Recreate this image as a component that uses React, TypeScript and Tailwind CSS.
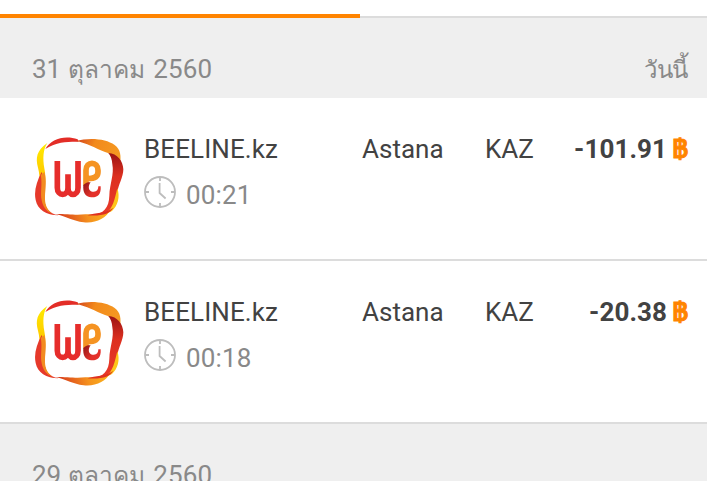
type Call = {
   operator: string
   city: string
   country: string
   duration: string
   amount: string
}

const calls: Call[] = [
   { operator: 'BEELINE.kz', city: 'Astana', country: 'KAZ', duration: '00:21', amount: '-101.91' },
   { operator: 'BEELINE.kz', city: 'Astana', country: 'KAZ', duration: '00:18', amount: '-20.38' },
]

const Logo = () => {
   return (
      <svg className="h-[92px] w-[92px] flex-shrink-0" viewBox="42 27 276 276" fill="none">
         <defs>
            <linearGradient id="left" x1="60" y1="70" x2="60" y2="260" gradientUnits="userSpaceOnUse">
               <stop offset="0" stopColor="#ffe600" />
               <stop offset="0.5" stopColor="#fdc400" />
               <stop offset="1" stopColor="#f0801c" />
            </linearGradient>
            <linearGradient id="top" x1="180" y1="45" x2="300" y2="90" gradientUnits="userSpaceOnUse">
               <stop offset="0" stopColor="#d9501c" />
               <stop offset="0.35" stopColor="#f28a1c" />
               <stop offset="1" stopColor="#f59a22" />
            </linearGradient>
            <linearGradient id="right" x1="285" y1="85" x2="290" y2="260" gradientUnits="userSpaceOnUse">
               <stop offset="0" stopColor="#9c1414" />
               <stop offset="0.4" stopColor="#dd3020" />
               <stop offset="1" stopColor="#e8392a" />
            </linearGradient>
            <linearGradient id="bottom" x1="120" y1="270" x2="290" y2="220" gradientUnits="userSpaceOnUse">
               <stop offset="0" stopColor="#d9401c" />
               <stop offset="0.45" stopColor="#f5921e" />
               <stop offset="1" stopColor="#fdc51a" />
            </linearGradient>
            <linearGradient id="tail" x1="190" y1="172" x2="222" y2="200" gradientUnits="userSpaceOnUse">
               <stop offset="0" stopColor="#8f1616" />
               <stop offset="1" stopColor="#e4312a" />
            </linearGradient>
         </defs>
         <path d="M82 54C50 76 46 98 54 128C62 158 59 196 62 222C65 246 77 263 102 270C80 258 73 242 73 215C73 188 80 162 73 130C68 100 69 74 82 54Z" fill="url(#left)" />
         <path d="M65 140C50 170 41 197 47 225C53 254 78 270 116 271C86 264 75 250 72 218C70 190 72 166 65 140Z" fill="#e6392a" />
         <path d="M62 150C68 177 60 202 65 226C69 246 78 259 96 266C80 252 74 238 75 214C76 190 81 168 73 141Z" fill="#f28b20" />
         <path d="M76 72C92 41 136 29 173 43L176 50C142 50 112 49 76 72Z" fill="#e32d27" />
         <path d="M166 48C210 37 258 41 284 60C302 73 304 93 300 118C294 99 280 89 255 81C225 70 201 53 166 48Z" fill="url(#top)" />
         <path d="M265 84C292 86 309 107 310 133C310 158 294 180 292 204C290 235 288 253 257 267C244 271 230 271 215 271C251 266 267 248 268 212C269 177 283 148 277 118C276 102 272 92 265 84Z" fill="url(#right)" />
         <path d="M292 190C301 216 293 243 276 258L256 268C279 251 284 222 292 190Z" fill="#fdc51a" />
         <path d="M106 267C145 267 166 271 196 268C225 267 250 270 272 253C258 282 225 296 191 292C158 288 142 275 106 267Z" fill="url(#bottom)" />
         <path d="M202 271C227 262 256 266 280 248C269 266 248 274 202 271Z" fill="#df3020" />
         <path d="M112 108V188C112 215 144 215 144 188V148M144 188C144 215 174 215 174 188V108" stroke="#e62d2b" strokeWidth="17" />
         <path d="M198 182V136C198 108 234 108 234 136V141C234 158 218 161 203 161" stroke="#f59322" strokeWidth="17" />
         <path d="M190 180C198 171 209 171 212 172C204 182 204 198 217 200C229 202 235 196 235 184H242C244 211 231 218 214 217C196 216 188 202 190 180Z" fill="url(#tail)" />
      </svg>
   )
}

const Clock = () => {
   return (
      <svg className="h-8 w-8" viewBox="0 0 32 32" fill="none" stroke="#bdbdbd" strokeWidth="1.8">
         <circle cx="16" cy="16" r="15" />
         <path d="M16 1v4M16 27v4M1 16h4M27 16h4M15.6 7v10l6 5.5" />
      </svg>
   )
}

const DateHeader = ({ day, month, year, label }: { day: string; month: string; year: string; label?: string }) => {
   return (
      <div className="flex h-20 flex-shrink-0 justify-between bg-[#efefef] pt-9 pr-[19px] pl-8 text-[#898989]">
         <div>
            {day} <span className="mr-[2px] text-[24.5px]">{month}</span> <span className="tracking-[0.15px]">{year}</span>
         </div>
         <div className="pt-px text-[24px] tracking-[-0.3px]">{label}</div>
      </div>
   )
}

const CallRow = ({ call }: { call: Call }) => {
   return (
      <div className="flex h-[163px] flex-shrink-0 border-b-2 border-[#dcdcdc] pt-9 pr-[19px] pl-[34px] text-[#424242]">
         <Logo />
         <div className="ml-[18px] w-[218px]">
            <div className="tracking-[0.1px]">{call.operator}</div>
            <div className="mt-[10px] flex items-center tracking-[0.15px] text-[#898989]">
               <Clock />
               <span className="mt-[6px] ml-[10px]">{call.duration}</span>
            </div>
         </div>
         <div className="w-[123px]">{call.city}</div>
         <div>{call.country}</div>
         <div className="ml-auto flex font-bold">
            <span className="tracking-[0.1px]">{call.amount}</span>
            <span className="ml-[5px] font-['Loma',sans-serif] text-[#ff8400] [-webkit-text-stroke:0.9px_#ff8400]">฿</span>
         </div>
      </div>
   )
}

export default function App() {
   return (
      <div className="flex h-[481px] w-[707px] flex-col overflow-hidden bg-white font-['Roboto','Noto_Sans',sans-serif] text-[26px] leading-[30px]">
         <div className="flex h-[18px] flex-shrink-0 items-end">
            <div className="h-1 w-[360px] bg-[#ff8400]" />
            <div className="h-0.5 flex-1 bg-[#dcdcdc]" />
         </div>
         <DateHeader day="31" month="ตุลาคม" year="2560" label="วันนี้" />
         {calls.map((call) => (
            <CallRow key={call.amount} call={call} />
         ))}
         <DateHeader day="29" month="ตุลาคม" year="2560" />
      </div>
   )
}
